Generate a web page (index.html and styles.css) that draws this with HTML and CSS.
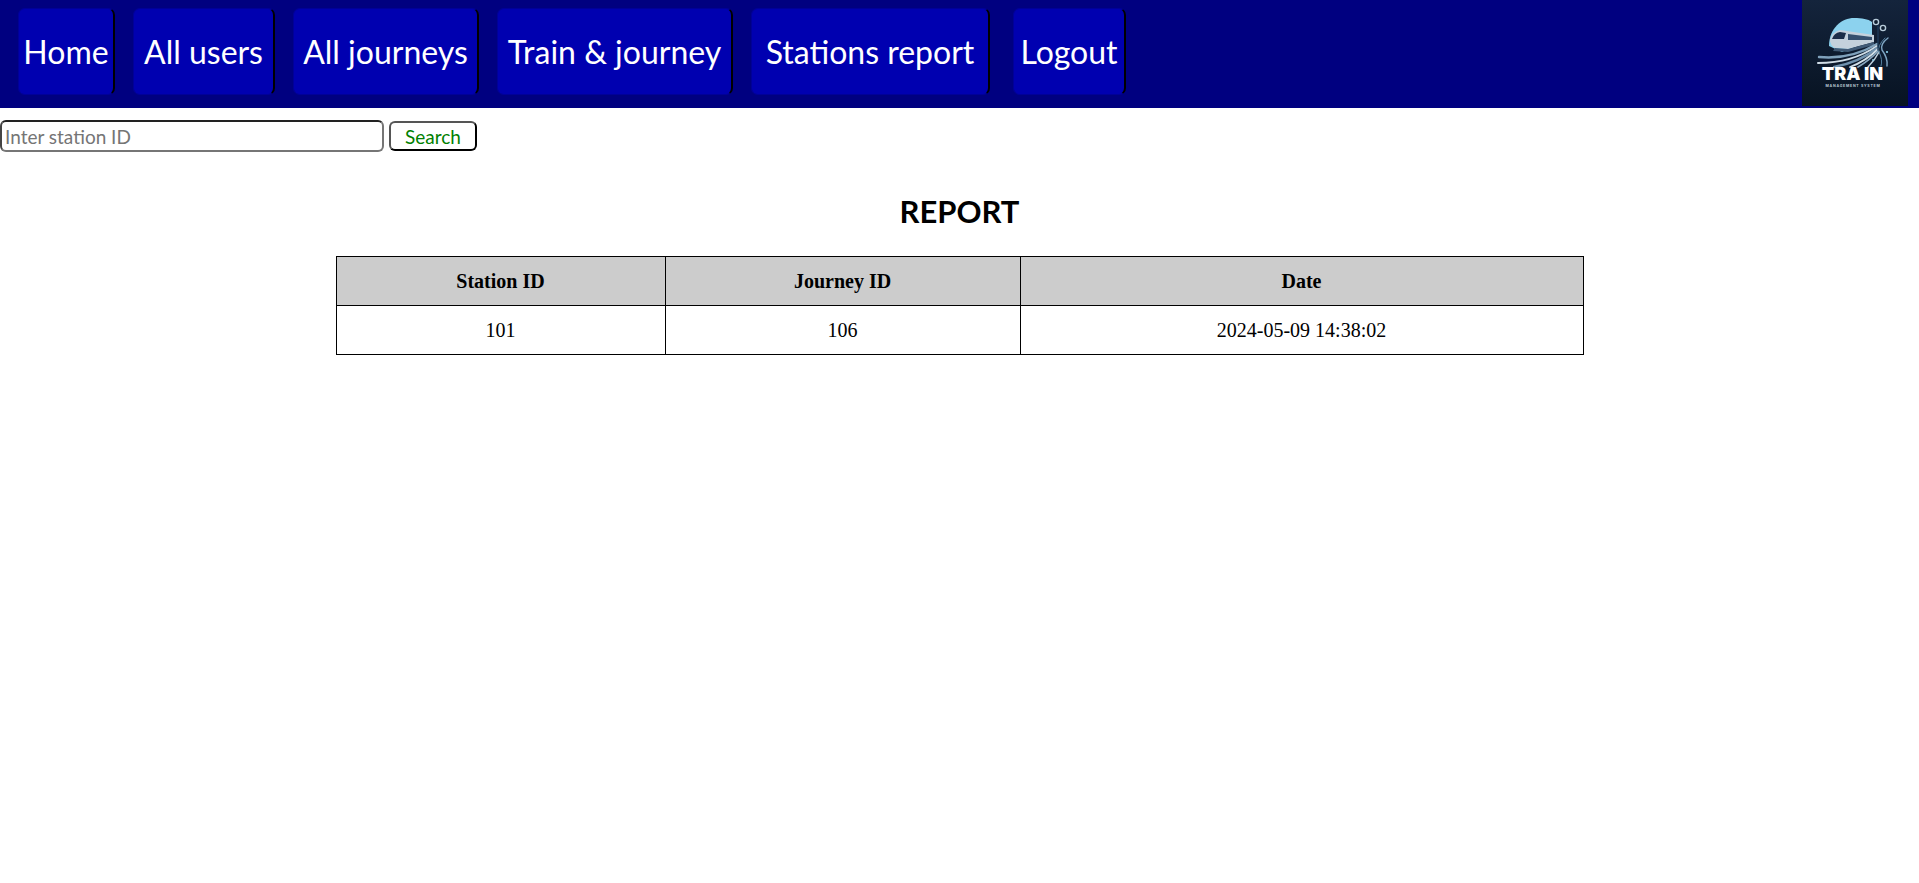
FILE: index.html
```html
<!DOCTYPE html>
<html lang="en">
<head>
    <meta charset="UTF-8">
    <meta name="viewport" content="width=device-width, initial-scale=1.0">
    <title>Stations report</title>
    <link rel="stylesheet" href="styles.css">
</head>
<body>
    <header class="topbar">
        <nav class="nav">
            <button class="nav-btn">Home</button>
            <button class="nav-btn">All users</button>
            <button class="nav-btn">All journeys</button>
            <button class="nav-btn">Train &amp; journey</button>
            <button class="nav-btn">Stations report</button>
            <button class="nav-btn nav-logout">Logout</button>
        </nav>
        <svg class="logo" viewBox="0 0 106 106" role="img" aria-label="Train management system">
            <defs>
                <linearGradient id="logo-bg" x1="0" y1="0" x2="0" y2="1">
                    <stop offset="0" stop-color="#14243c"/>
                    <stop offset="1" stop-color="#071322"/>
                </linearGradient>
                <filter id="soft"><feGaussianBlur stdDeviation="0.4"/></filter>
            </defs>
            <rect width="106" height="106" fill="url(#logo-bg)"/>
            <g filter="url(#soft)">
                <!-- sky -->
                <path d="M27 46 C27 28 40 18 52 18 C60 18 66 19 70 22 L70 40 L40 52 Z" fill="#8cd2ee"/>
                <!-- train -->
                <path d="M28 40 Q30 32 38 30 L72 35 L72 42 L46 49 L33 48 Q28 45 28 40 Z" fill="#c4d1dc"/>
                <path d="M30 39 Q32 33 38 32 L44 33 L42 39 Z" fill="#1b2d48"/>
                <path d="M46 34 L70 37 L70 40 L46 40 Z" fill="#34506e"/>
                <path d="M33 48 L46 49 L72 42 L72 45 L46 52 L31 51 Z" fill="#3f5a76"/>
                <!-- rails -->
                <g fill="none" stroke-linecap="round">
                    <path d="M17 57 Q48 60 75 44" stroke="#7fa1bb" stroke-width="2.4"/>
                    <path d="M16 63 Q50 63 75 46" stroke="#cfdce6" stroke-width="2"/>
                    <path d="M32 67 Q58 62 75 48" stroke="#6f91ad" stroke-width="2.4"/>
                    <path d="M48 67 Q64 61 76 49" stroke="#d3e0e9" stroke-width="1.8"/>
                    <path d="M56 67 Q68 60 76 51" stroke="#8aa9c1" stroke-width="1.8"/>
                    <path d="M66 67 Q73 60 77 52" stroke="#c2d2de" stroke-width="1.5"/>
                    <path d="M86 38 Q78 44 80 50 Q86 58 85 66" stroke="#7fa6c4" stroke-width="1.4"/>
                    <path d="M83 38 Q75 46 77 52 Q81 60 79 66" stroke="#54809f" stroke-width="1"/>
                    <path d="M76 26 L76 50" stroke="#1c3a58" stroke-width="1.4"/>
                </g>
                <circle cx="74" cy="22" r="2.6" fill="#0b1a2e" stroke="#b8ccda" stroke-width="1.4"/>
                <circle cx="81" cy="28" r="2.6" fill="#0b1a2e" stroke="#b8ccda" stroke-width="1.4"/>
                <circle cx="85" cy="52" r="1.1" fill="#8cd2ee"/>
                <circle cx="71" cy="60" r="0.9" fill="#8cd2ee"/>
            </g>
            <text class="logo-name" x="50.5" y="80" text-anchor="middle">TRA IN</text>
            <text class="logo-sub" x="51" y="86.5" text-anchor="middle">MANAGEMENT SYSTEM</text>
        </svg>
    </header>

    <form class="search">
        <input class="search-input" type="text" placeholder="Inter station ID">
        <button class="search-btn" type="submit">Search</button>
    </form>

    <h2 class="title">REPORT</h2>

    <table class="report">
        <thead>
            <tr>
                <th class="col-station">Station ID</th>
                <th class="col-journey">Journey ID</th>
                <th>Date</th>
            </tr>
        </thead>
        <tbody>
            <tr>
                <td>101</td>
                <td>106</td>
                <td>2024-05-09 14:38:02</td>
            </tr>
        </tbody>
    </table>
</body>
</html>
```

FILE: styles.css
```css
body {
    margin: 0;
    background-color: white;
    font-family: "Comic Sans MS", Lato, sans-serif;
}

.topbar {
    display: flex;
    justify-content: space-between;
    height: 108px;
    padding-right: 11px;
    background-color: #000080;
}

.nav {
    display: grid;
    grid-template-columns: 97px 142px 186px 236px 239px 118px;
    column-gap: 18px;
    height: 87px;
    margin: 8px 0 0 18px;
}

.nav-btn {
    padding: 0;
    color: white;
    font-family: inherit;
    font-size: 32px;
    background-color: #0000b0;
    border: 1px solid #000098;
    border-right: 2px solid black;
    border-radius: 7px;
    cursor: pointer;
}

.nav-logout {
    margin-left: 5px;
}

.logo {
    display: block;
    width: 106px;
    height: 106px;
}

.logo-name {
    fill: white;
    font-family: Inter, sans-serif;
    font-size: 18px;
    font-weight: 900;
}

.logo-sub {
    fill: #b9c7d3;
    font-family: Inter, sans-serif;
    font-size: 3.6px;
    font-weight: 700;
    letter-spacing: 0.7px;
}

.search {
    display: flex;
    align-items: center;
    gap: 5px;
    margin-top: 12px;
}

.search-input {
    box-sizing: border-box;
    width: 384px;
    height: 32px;
    padding: 0 3px;
    font-family: inherit;
    font-size: 19px;
    border: 2px solid;
    border-color: #222 #767676 #767676 #444;
    border-radius: 6px;
}

.search-btn {
    box-sizing: border-box;
    width: 88px;
    height: 30px;
    padding: 0;
    color: green;
    font-family: inherit;
    font-size: 19px;
    background-color: white;
    border: 2px solid;
    border-color: #555 black black #555;
    border-radius: 6px;
    cursor: pointer;
}

.title {
    margin: 40px 0 26px;
    font-size: 31px;
    line-height: 38px;
    text-align: center;
}

.report {
    width: 1248px;
    margin: 0 auto;
    font-family: "Liberation Serif", serif;
    font-size: 20px;
    text-align: center;
    border-collapse: collapse;
}

.report th,
.report td {
    padding: 12.5px 10px;
    border: 1px solid black;
}

.report th {
    background-color: #ccc;
}

.col-station {
    width: 308px;
}

.col-journey {
    width: 334px;
}
```
